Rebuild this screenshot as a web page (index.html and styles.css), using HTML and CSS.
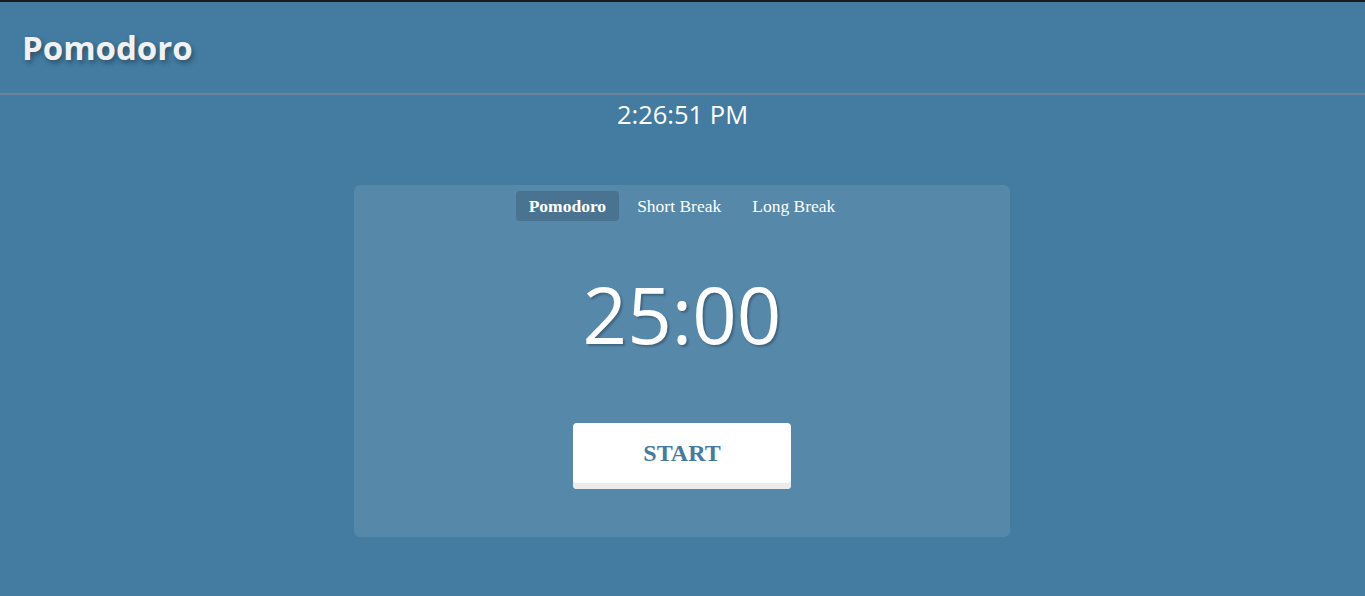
FILE: index.html
```html
<!DOCTYPE html>
<html lang="en">
<head>
<meta charset="utf-8">
<title>Pomodoro</title>
<link rel="stylesheet" href="styles.css">
</head>
<body>
<header class="topbar">
  <h1 class="brand">Pomodoro</h1>
</header>
<div class="clock">2:26:51 PM</div>
<main class="wrap">
  <section class="card">
    <nav class="tabs">
      <button class="tab active">Pomodoro</button>
      <button class="tab">Short Break</button>
      <button class="tab">Long Break</button>
    </nav>
    <div class="timer">25:00</div>
    <button class="start">START</button>
  </section>
</main>
</body>
</html>
```
FILE: styles.css
```css
html, body {
  margin: 0;
  padding: 0;
}
body {
  background: #437ba1;
  font-family: "Open Sans", "Noto Sans", sans-serif;
  color: #fff;
  min-height: 596px;
}
.topbar {
  height: 91px;
  border-top: 2px solid #1a1a1a;
  border-bottom: 2px solid #6f8496;
  box-sizing: content-box;
  display: flex;
  align-items: center;
  padding-left: 22px;
}
.brand {
  margin: 0;
  font-size: 33px;
  font-weight: 700;
  color: #f1f1f1;
  text-shadow: 2px 3px 5px rgba(0,0,0,0.35);
  letter-spacing: 0;
}
.clock {
  text-align: center;
  font-size: 25.5px;
  line-height: 40px;
  margin-top: -1px;
}
.wrap {
  display: flex;
  justify-content: center;
  padding-top: 51px;
  padding-right: 1px;
}
.card {
  width: 656px;
  height: 352px;
  box-sizing: border-box;
  background: rgba(255,255,255,0.1);
  border-radius: 6px;
  display: flex;
  flex-direction: column;
  align-items: center;
  padding-top: 6px;
}
.tabs {
  display: flex;
  gap: 5px;
}
.tab {
  font-family: "Liberation Serif", "Times New Roman", serif;
  font-size: 17.5px;
  color: #fff;
  background: transparent;
  border: none;
  border-radius: 4px;
  height: 30px;
  padding: 0 13px;
}
.tab.active {
  background: rgba(0,0,0,0.15);
  font-weight: 700;
}
.timer {
  font-size: 78px;
  line-height: 1;
  margin-top: 54px;
  text-shadow: 2px 2px 2px rgba(0,0,0,0.25);
}
.start {
  margin-top: 70px;
  width: 218px;
  height: 66px;
  background: #fff;
  border: none;
  border-radius: 4px;
  box-shadow: inset 0 -6px 0 #ebebeb;
  color: #437ba1;
  font-family: "Liberation Serif", "Times New Roman", serif;
  font-weight: 700;
  font-size: 24px;
  padding-bottom: 6px;
}
```
